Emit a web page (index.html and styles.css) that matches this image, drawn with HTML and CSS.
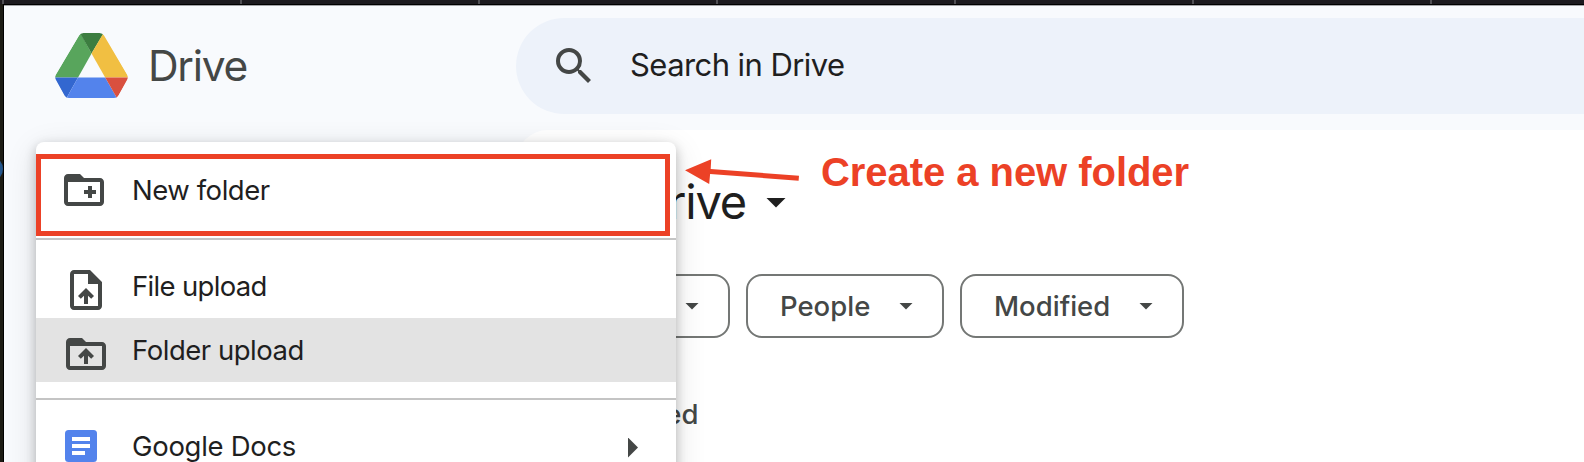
FILE: index.html
```html
<!DOCTYPE html>
<html lang="en">
<head>
<meta charset="utf-8">
<title>Drive</title>
<link rel="stylesheet" href="styles.css">
</head>
<body>
<div class="window">
  <div class="tabstrip"></div>
  <div class="frame">
    <div class="desktop-edge"><span class="dot"></span></div>
    <div class="app">
      <header class="header">
        <div class="brand">
          <svg class="logo" viewBox="0 0 73 65" width="73" height="65">
            <defs><clipPath id="r"><path d="M28.5 0h16q3 0 4.5 2.5L72 41.500q1.600 2.800 0 5.500L63.500 62.500q-1.500 2.500-4.500 2.500H14q-3 0-4.500-2.500L1 47q-1.600-2.700 0-5.500L24 2.500Q25.500 0 28.500 0z"/></clipPath></defs>
            <g clip-path="url(#r)">
              <path fill="#58a55c" d="M25.500 0L-1 44.500H23L36.500 20.500z"/>
              <path fill="#3c7d40" d="M25 0h23.500v.5L36.500 20.500z"/>
              <path fill="#f1bf42" d="M48.500 0L36.500 20.500L50.200 44.500H74z"/>
              <path fill="#3367d0" d="M-1 44.500H23L11 66z"/>
              <path fill="#5383ec" d="M23 44.500H50.200L62.500 66H11z"/>
              <path fill="#d9503f" d="M50.200 44.500H74L62 65.200z"/>
            </g>
          </svg>
          <span class="brand-name">Drive</span>
        </div>
        <div class="search">
          <svg class="search-icon" viewBox="0 0 24 24" width="48" height="48"><path d="M15.500 14h-.79l-.28-.27A6.471 6.471 0 0 0 16 9.500 6.500 6.500 0 1 0 9.500 16c1.610 0 3.090-.59 4.230-1.570l.27.28v.79l5 4.990L20.490 19l-4.990-5zm-6 0C7.010 14 5 11.990 5 9.500S7.010 5 9.500 5 14 7.010 14 9.500 11.990 14 9.500 14z"/></svg>
          <span class="search-text">Search in Drive</span>
        </div>
      </header>
      <main class="panel">
        <div class="title"><h1>My Drive</h1><i class="caret large"></i></div>
        <div class="chips">
          <button class="chip type">Type<i class="caret"></i></button>
          <button class="chip people">People<i class="caret"></i></button>
          <button class="chip modified">Modified<i class="caret"></i></button>
        </div>
        <div class="section">Suggested</div>
      </main>
    </div>
  </div>

  <nav class="menu">
    <div class="item">
      <svg class="icon" viewBox="0 0 24 24" width="48" height="48"><path fill-rule="evenodd" d="M20 6h-8l-2-2H4c-1.110 0-2 .89-2 2v12c0 1.110.89 2 2 2h16c1.110 0 2-.89 2-2V8c0-1.110-.89-2-2-2zM20 18H4V8h16zM12 14h2v2h2v-2h2v-2h-2v-2h-2v2h-2z"/></svg>
      <span class="new">New folder</span>
    </div>
    <hr>
    <div class="item">
      <svg class="icon shifted" viewBox="0 0 24 24" width="48" height="48"><path fill-rule="evenodd" d="M14 2H6c-1.100 0-2 .9-2 2v16c0 1.100.9 2 2 2h12c1.100 0 2-.9 2-2V8zM18 20H6V4h7v5h5zM8 15.010l1.410 1.410L11 14.840V19h2v-4.160l1.590 1.590L16 15.010 12 11z"/></svg>
      <span class="file">File upload</span>
    </div>
    <div class="item hovered">
      <svg class="icon shifted" viewBox="0 0 24 24" width="48" height="48"><path fill-rule="evenodd" d="M20 6h-8l-2-2H4c-1.100 0-2 .9-2 2v12c0 1.100.9 2 2 2h16c1.100 0 2-.9 2-2V8c0-1.100-.9-2-2-2zM20 18H4V8h16zM8 13.010l1.410 1.410L11 12.840V17h2v-4.160l1.590 1.590L16 13.010 12 9z"/></svg>
      <span class="folder">Folder upload</span>
    </div>
    <hr>
    <div class="item">
      <svg class="docs-icon" viewBox="0 0 32 32" width="32" height="32"><rect width="32" height="32" rx="3.500" fill="#5383ec"/><path fill="#fff" d="M7 7h18v4H7zM7 14h18v4H7zM7 21h13v4H7z"/></svg>
      <span class="docs">Google Docs</span>
      <i class="submenu"></i>
    </div>
  </nav>

  <div class="highlight"></div>
  <svg class="arrow" viewBox="0 0 115 26" width="115" height="26"><path d="M0 11.300L26.200.3l-.5 9.800L114 16.700l-.4 5L25.100 15l-.9 10z"/></svg>
  <div class="note">Create a new folder</div>
</div>
</body>
</html>
```
FILE: styles.css
```css
* { box-sizing: border-box; }
body { margin: 0; font-family: Inter, "Liberation Sans", sans-serif; color: #1f1f1f; }
.window { position: relative; display: flex; flex-direction: column; width: 1584px; height: 462px; overflow: hidden; background: #f8fafd; }
.tabstrip {
  height: 6px; flex: none;
  background:
    linear-gradient(#000, #000) 0 4px / 100% 1px no-repeat,
    linear-gradient(#a3a4a8, #a3a4a8) 0 5px / 100% 1px no-repeat,
    repeating-linear-gradient(90deg, #504f54 0 2px, #1c1a1f 2px 238px) 2px 0;
}
.frame { display: flex; flex: 1; min-height: 0; }
.desktop-edge { flex: none; width: 4px; margin-top: -2px; background: #1c1b14; border-right: 1px solid #000; position: relative; overflow: hidden; }
.dot { position: absolute; left: -23px; top: 152px; width: 26px; height: 26px; border-radius: 50%; background: #24568c; }
.app { flex: 1; min-width: 0; display: flex; flex-direction: column; }

.header { display: flex; height: 124px; padding-top: 12px; flex: none; }
.brand { display: flex; width: 512px; padding: 14px 0 0 51px; gap: 20px; align-items: flex-start; }
.logo { flex: none; margin-top: .5px; }
.brand-name { margin-top: 1px; font-size: 42.500px; line-height: 66px; letter-spacing: -1.300px; color: #444746; }
.search { display: flex; align-items: center; flex: 1; height: 96px; padding-left: 34px; border-radius: 48px 0 0 48px; background: #edf2fa; }
.search-icon { fill: #444746; flex: none; }
.search-text { margin: -2px 0 0 32px; font-size: 31px; line-height: 40px; letter-spacing: -.57px; white-space: nowrap; }

.panel { flex: 1; min-width: 0; margin-left: 512px; padding-top: 41px; border-radius: 32px 0 0 0; background: #fff; }
.title { display: flex; align-items: center; height: 60px; }
.title h1 { width: 230px; margin: 2px 0 0; font-size: 47px; line-height: 60px; font-weight: 400; letter-spacing: -1.200px; text-align: right; white-space: nowrap; }
.caret { width: 14px; height: 7px; background: #444746; clip-path: polygon(0 0, 100% 0, 50% 100%); }
.caret.large { width: 20px; height: 10px; margin: 3px 0 0 20px; background: #1f1f1f; }
.chips { display: flex; gap: 16px; margin-top: 43px; padding-left: 48px; }
.chip { display: flex; align-items: center; justify-content: space-between; height: 64px; padding: 0 29px 0 32px; border: 2px solid #747775; border-radius: 16px; background: none; font: 500 27.500px Inter, sans-serif; color: #444746; }
.type { width: 166px; }
.people { width: 198px; }
.modified { width: 224px; }
.section { width: 182.500px; margin-top: 56px; font-size: 27.500px; font-weight: 500; line-height: 40px; text-align: right; color: #444746; }

.menu { position: absolute; left: 36px; top: 142px; width: 640px; height: 400px; padding-top: 16px; border-radius: 8px; background: #fff; box-shadow: 0 4px 12px rgba(0, 0, 0, .24), 0 8px 32px rgba(0, 0, 0, .12); }
.item { display: flex; align-items: center; height: 64px; font-size: 27.500px; line-height: 64px; white-space: nowrap; }
.item span { position: absolute; left: 96px; }
.icon { margin: 0 0 0 24px; fill: #444746; }
.shifted { margin: 8px 0 0 26px; }
.docs-icon { margin-left: 29px; }
.hovered { background: #e3e3e3; }
.new { letter-spacing: -.45px; }
.file { letter-spacing: -.68px; }
.folder { letter-spacing: -.47px; }
.docs { letter-spacing: -.3px; }
.menu hr { height: 2px; margin: 16px 0 14px; border: 0; background: #c4c4c4; }
.submenu { width: 10px; height: 20px; margin: 3px 38px 0 auto; background: #444746; clip-path: polygon(0 0, 100% 50%, 0 100%); }

.highlight { position: absolute; left: 36px; top: 154px; width: 634px; height: 82px; border: 5px solid #ec4126; }
.arrow { position: absolute; left: 685px; top: 159px; fill: #ec4126; }
.note { position: absolute; left: 821px; top: 149px; font: bold 40px/46px "Liberation Sans", Arial, sans-serif; letter-spacing: -.05px; color: #ec4126; white-space: nowrap; }
```
